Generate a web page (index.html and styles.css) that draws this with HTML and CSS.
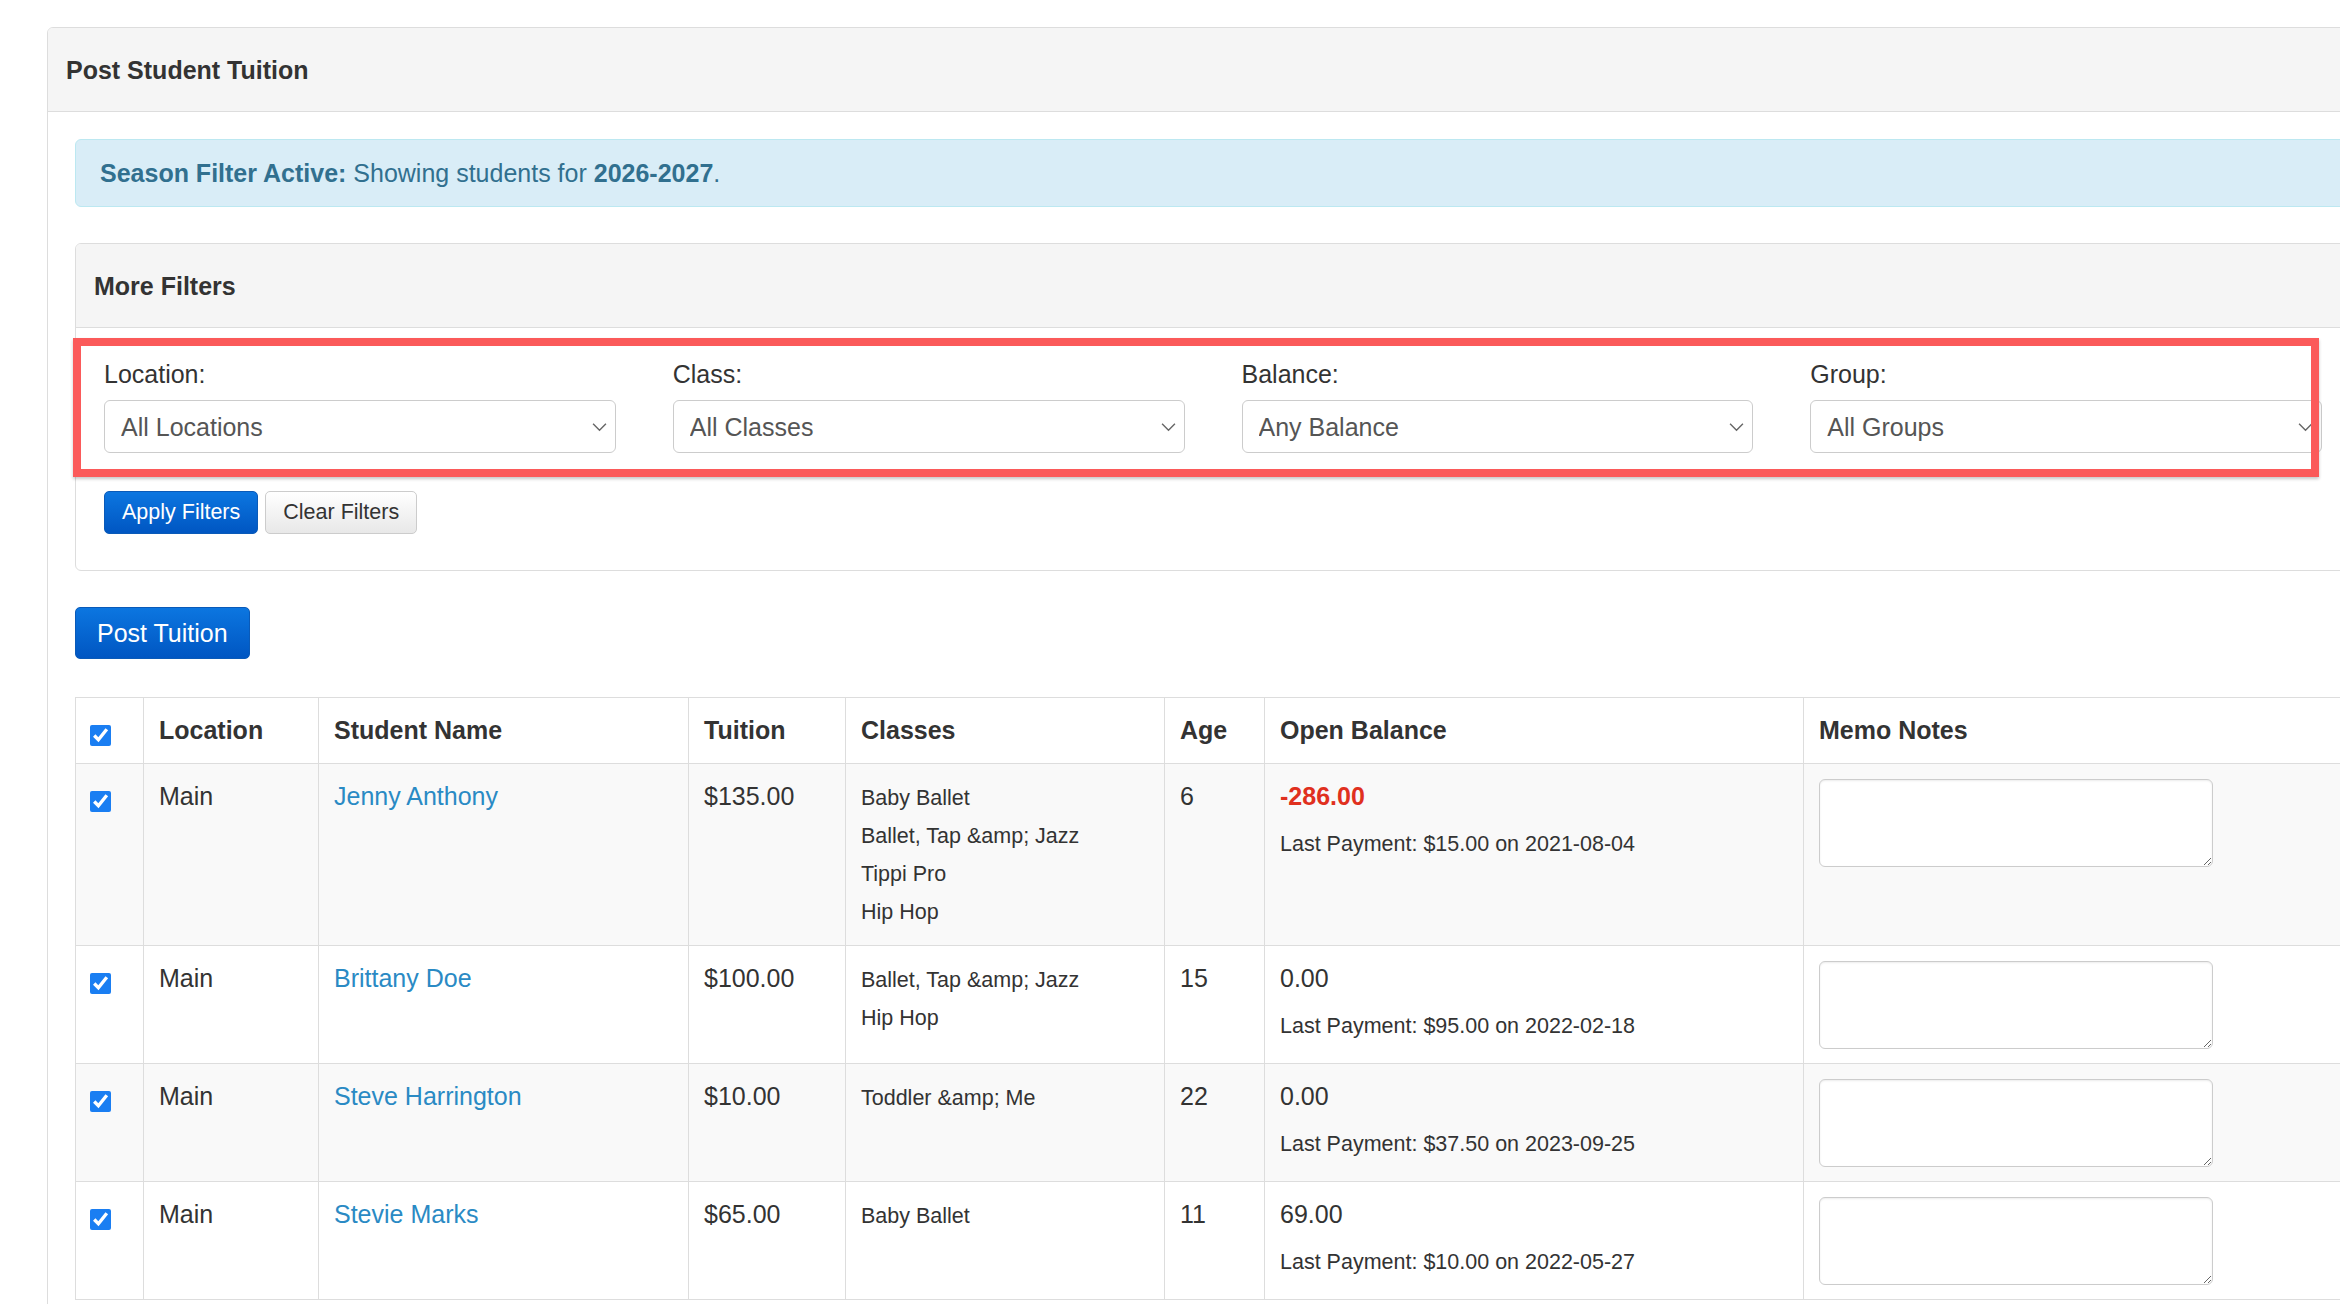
FILE: index.html
```html
<!doctype html>
<html lang="en">
	<head>
		<meta charset="utf-8">
		<title>Post Student Tuition</title>
		<link rel="stylesheet" href="styles.css">
	</head>
	<body>
<div class="panel page-panel">
	<div class="panel-heading">
		<h3 class="panel-title">Post Student Tuition</h3>
	</div>
	<div class="panel-body">

		<div class="alert alert-info">
			<strong>Season Filter Active:</strong> Showing students for <strong>2026-2027</strong>.
		</div>

		<div class="panel filters-panel">
			<div class="panel-heading">
				<h3 class="panel-title">More Filters</h3>
			</div>
			<div class="panel-body">
				<form>
					<div class="filter-row">
						<div class="filter-group">
							<label for="f_location">Location:</label>
							<div class="select-wrap">
								<select id="f_location">
									<option>All Locations</option>
									<option>Main</option>
								</select>
								<svg class="chev" viewBox="0 0 14 9"><path d="M1 1.5 L7 7.5 L13 1.5" /></svg>
							</div>
						</div>
						<div class="filter-group">
							<label for="f_class">Class:</label>
							<div class="select-wrap">
								<select id="f_class">
									<option>All Classes</option>
									<option>Baby Ballet</option>
									<option>Hip Hop</option>
								</select>
								<svg class="chev" viewBox="0 0 14 9"><path d="M1 1.5 L7 7.5 L13 1.5" /></svg>
							</div>
						</div>
						<div class="filter-group">
							<label for="f_balance">Balance:</label>
							<div class="select-wrap">
								<select id="f_balance">
									<option>Any Balance</option>
									<option>Owes</option>
									<option>Credit</option>
								</select>
								<svg class="chev" viewBox="0 0 14 9"><path d="M1 1.5 L7 7.5 L13 1.5" /></svg>
							</div>
						</div>
						<div class="filter-group">
							<label for="f_group">Group:</label>
							<div class="select-wrap">
								<select id="f_group">
									<option>All Groups</option>
								</select>
								<svg class="chev" viewBox="0 0 14 9"><path d="M1 1.5 L7 7.5 L13 1.5" /></svg>
							</div>
						</div>
					</div>
					<div class="filter-actions">
						<button type="button" class="btn btn-primary">Apply Filters</button>
						<button type="button" class="btn btn-default">Clear Filters</button>
					</div>
				</form>
			</div>
		</div>

		<button type="button" class="btn btn-primary btn-post">Post Tuition</button>

		<table class="tuition-table">
			<colgroup>
				<col class="c-cb">
				<col class="c-loc">
				<col class="c-name">
				<col class="c-tuition">
				<col class="c-classes">
				<col class="c-age">
				<col class="c-balance">
				<col class="c-memo">
			</colgroup>
			<thead>
				<tr>
					<th class="cb-cell"><input type="checkbox" checked></th>
					<th>Location</th>
					<th>Student Name</th>
					<th>Tuition</th>
					<th>Classes</th>
					<th>Age</th>
					<th>Open Balance</th>
					<th>Memo Notes</th>
				</tr>
			</thead>
			<tbody>
				<tr>
					<td class="cb-cell"><input type="checkbox" checked></td>
					<td>Main</td>
					<td><a href="#">Jenny Anthony</a></td>
					<td>$135.00</td>
					<td class="classes">
						<div>Baby Ballet</div>
						<div>Ballet, Tap &amp;amp; Jazz</div>
						<div>Tippi Pro</div>
						<div>Hip Hop</div>
					</td>
					<td>6</td>
					<td>
						<div class="balance-neg">-286.00</div>
						<div class="last-pay">Last Payment: $15.00 on 2021-08-04</div>
					</td>
					<td><textarea></textarea></td>
				</tr>
				<tr>
					<td class="cb-cell"><input type="checkbox" checked></td>
					<td>Main</td>
					<td><a href="#">Brittany Doe</a></td>
					<td>$100.00</td>
					<td class="classes">
						<div>Ballet, Tap &amp;amp; Jazz</div>
						<div>Hip Hop</div>
					</td>
					<td>15</td>
					<td>
						<div>0.00</div>
						<div class="last-pay">Last Payment: $95.00 on 2022-02-18</div>
					</td>
					<td><textarea></textarea></td>
				</tr>
				<tr>
					<td class="cb-cell"><input type="checkbox" checked></td>
					<td>Main</td>
					<td><a href="#">Steve Harrington</a></td>
					<td>$10.00</td>
					<td class="classes">
						<div>Toddler &amp;amp; Me</div>
					</td>
					<td>22</td>
					<td>
						<div>0.00</div>
						<div class="last-pay">Last Payment: $37.50 on 2023-09-25</div>
					</td>
					<td><textarea></textarea></td>
				</tr>
				<tr>
					<td class="cb-cell"><input type="checkbox" checked></td>
					<td>Main</td>
					<td><a href="#">Stevie Marks</a></td>
					<td>$65.00</td>
					<td class="classes">
						<div>Baby Ballet</div>
					</td>
					<td>11</td>
					<td>
						<div>69.00</div>
						<div class="last-pay">Last Payment: $10.00 on 2022-05-27</div>
					</td>
					<td><textarea></textarea></td>
				</tr>
			</tbody>
		</table>

	</div>
</div>
	</body>
</html>
```

FILE: styles.css
```css
html {
	overflow: hidden;
}

body {
	margin: 0;
	font-family: "Liberation Sans", Arial, Helvetica, sans-serif;
	font-size: 25px;
	line-height: 36px;
	color: #333;
	background: #fff;
}

a {
	color: #2a8ac4;
	text-decoration: none;
}

/* panels */
.panel {
	border: 1px solid #ddd;
	border-radius: 6px;
	background: #fff;
}

.panel-heading {
	padding: 24px 18px 23px;
	background: #f5f5f5;
	border-bottom: 1px solid #ddd;
	border-radius: 5px 5px 0 0;
}

.panel-title {
	margin: 0;
	font-size: 25px;
	line-height: 36px;
	font-weight: bold;
}

.page-panel {
	box-sizing: border-box;
	width: 2332px;
	margin: 27px 0 0 47px;
}

.page-panel > .panel-body {
	padding: 27px 27px;
}

.alert {
	padding: 15px 24px;
	margin-bottom: 36px;
	border: 1px solid transparent;
	border-radius: 6px;
}

.alert-info {
	background: #d9edf7;
	border-color: #bce8f1;
	color: #31708f;
}

/* more filters */
.filters-panel {
	margin-bottom: 36px;
}

.filters-panel .panel-body {
	padding: 28px 28px 36px;
}

.filter-row {
	position: relative;
	display: grid;
	grid-template-columns: repeat(4, 1fr);
	column-gap: 57px;
}

/* red highlight drawn over the filter row */
.filter-row::after {
	content: "";
	position: absolute;
	left: -31px;
	top: -18px;
	right: 3px;
	bottom: -24px;
	border: 8px solid #fb5a5a;
	box-shadow: 0 2px 3px rgba(0, 0, 0, .22);
	pointer-events: none;
}

.filter-group label {
	display: block;
	margin-bottom: 8px;
}

.select-wrap {
	position: relative;
}

select {
	-webkit-appearance: none;
	appearance: none;
	box-sizing: border-box;
	width: 100%;
	height: 53px;
	padding: 0 40px 0 16px;
	font: inherit;
	color: #555;
	background: #fff;
	border: 1px solid #ccc;
	border-radius: 6px;
}

.chev {
	position: absolute;
	right: 9px;
	top: 50%;
	width: 15px;
	height: 10px;
	margin-top: -5px;
	fill: none;
	stroke: #666;
	stroke-width: 1.3;
	pointer-events: none;
}

.filter-actions {
	display: flex;
	gap: 7px;
	margin-top: 38px;
}

/* buttons */
.btn {
	font-family: inherit;
	font-size: 21.5px;
	line-height: 31px;
	padding: 5px 17px;
	border: 1px solid;
	border-radius: 5px;
	cursor: pointer;
}

.btn-primary {
	color: #fff;
	background: linear-gradient(#0c76e0, #0056c2);
	border-color: #0a5ab8;
}

.btn-default {
	color: #333;
	background: linear-gradient(#fff, #e8e8e8);
	border-color: #ccc;
}

.btn-post {
	display: block;
	font-size: 25px;
	line-height: 36px;
	padding: 7px 21px;
	margin-bottom: 38px;
}

/* table */
.tuition-table {
	width: 2276px;
	table-layout: fixed;
	border-collapse: collapse;
	border: 1px solid #ddd;
}

.c-cb { width: 68px; }
.c-loc { width: 175px; }
.c-name { width: 370px; }
.c-tuition { width: 157px; }
.c-classes { width: 319px; }
.c-age { width: 100px; }
.c-balance { width: 539px; }
.c-memo { width: 548px; }

.tuition-table th,
.tuition-table td {
	padding: 15px 15px 14px;
	border: 1px solid #ddd;
	line-height: 35px;
	text-align: left;
	vertical-align: top;
}

.tuition-table th {
	padding-bottom: 15px;
	font-weight: bold;
}

.tuition-table tbody tr:nth-child(odd) {
	background: #f9f9f9;
}

.tuition-table .cb-cell {
	padding-left: 14px;
}

.cb-cell input {
	display: block;
	width: 21px;
	height: 21px;
	margin: 12px 0 0;
	accent-color: #1a7ef2;
}

.classes div {
	font-size: 21.5px;
	line-height: 38px;
}

.balance-neg {
	color: #e0301e;
	font-weight: bold;
}

.last-pay {
	margin-top: 15px;
	font-size: 21.5px;
	line-height: 30px;
}

textarea {
	display: block;
	box-sizing: border-box;
	width: 394px;
	height: 88px;
	border: 1px solid #ccc;
	border-radius: 6px;
	box-shadow: inset 0 1px 2px rgba(0, 0, 0, .08);
	font: inherit;
	background: #fff;
}
```
